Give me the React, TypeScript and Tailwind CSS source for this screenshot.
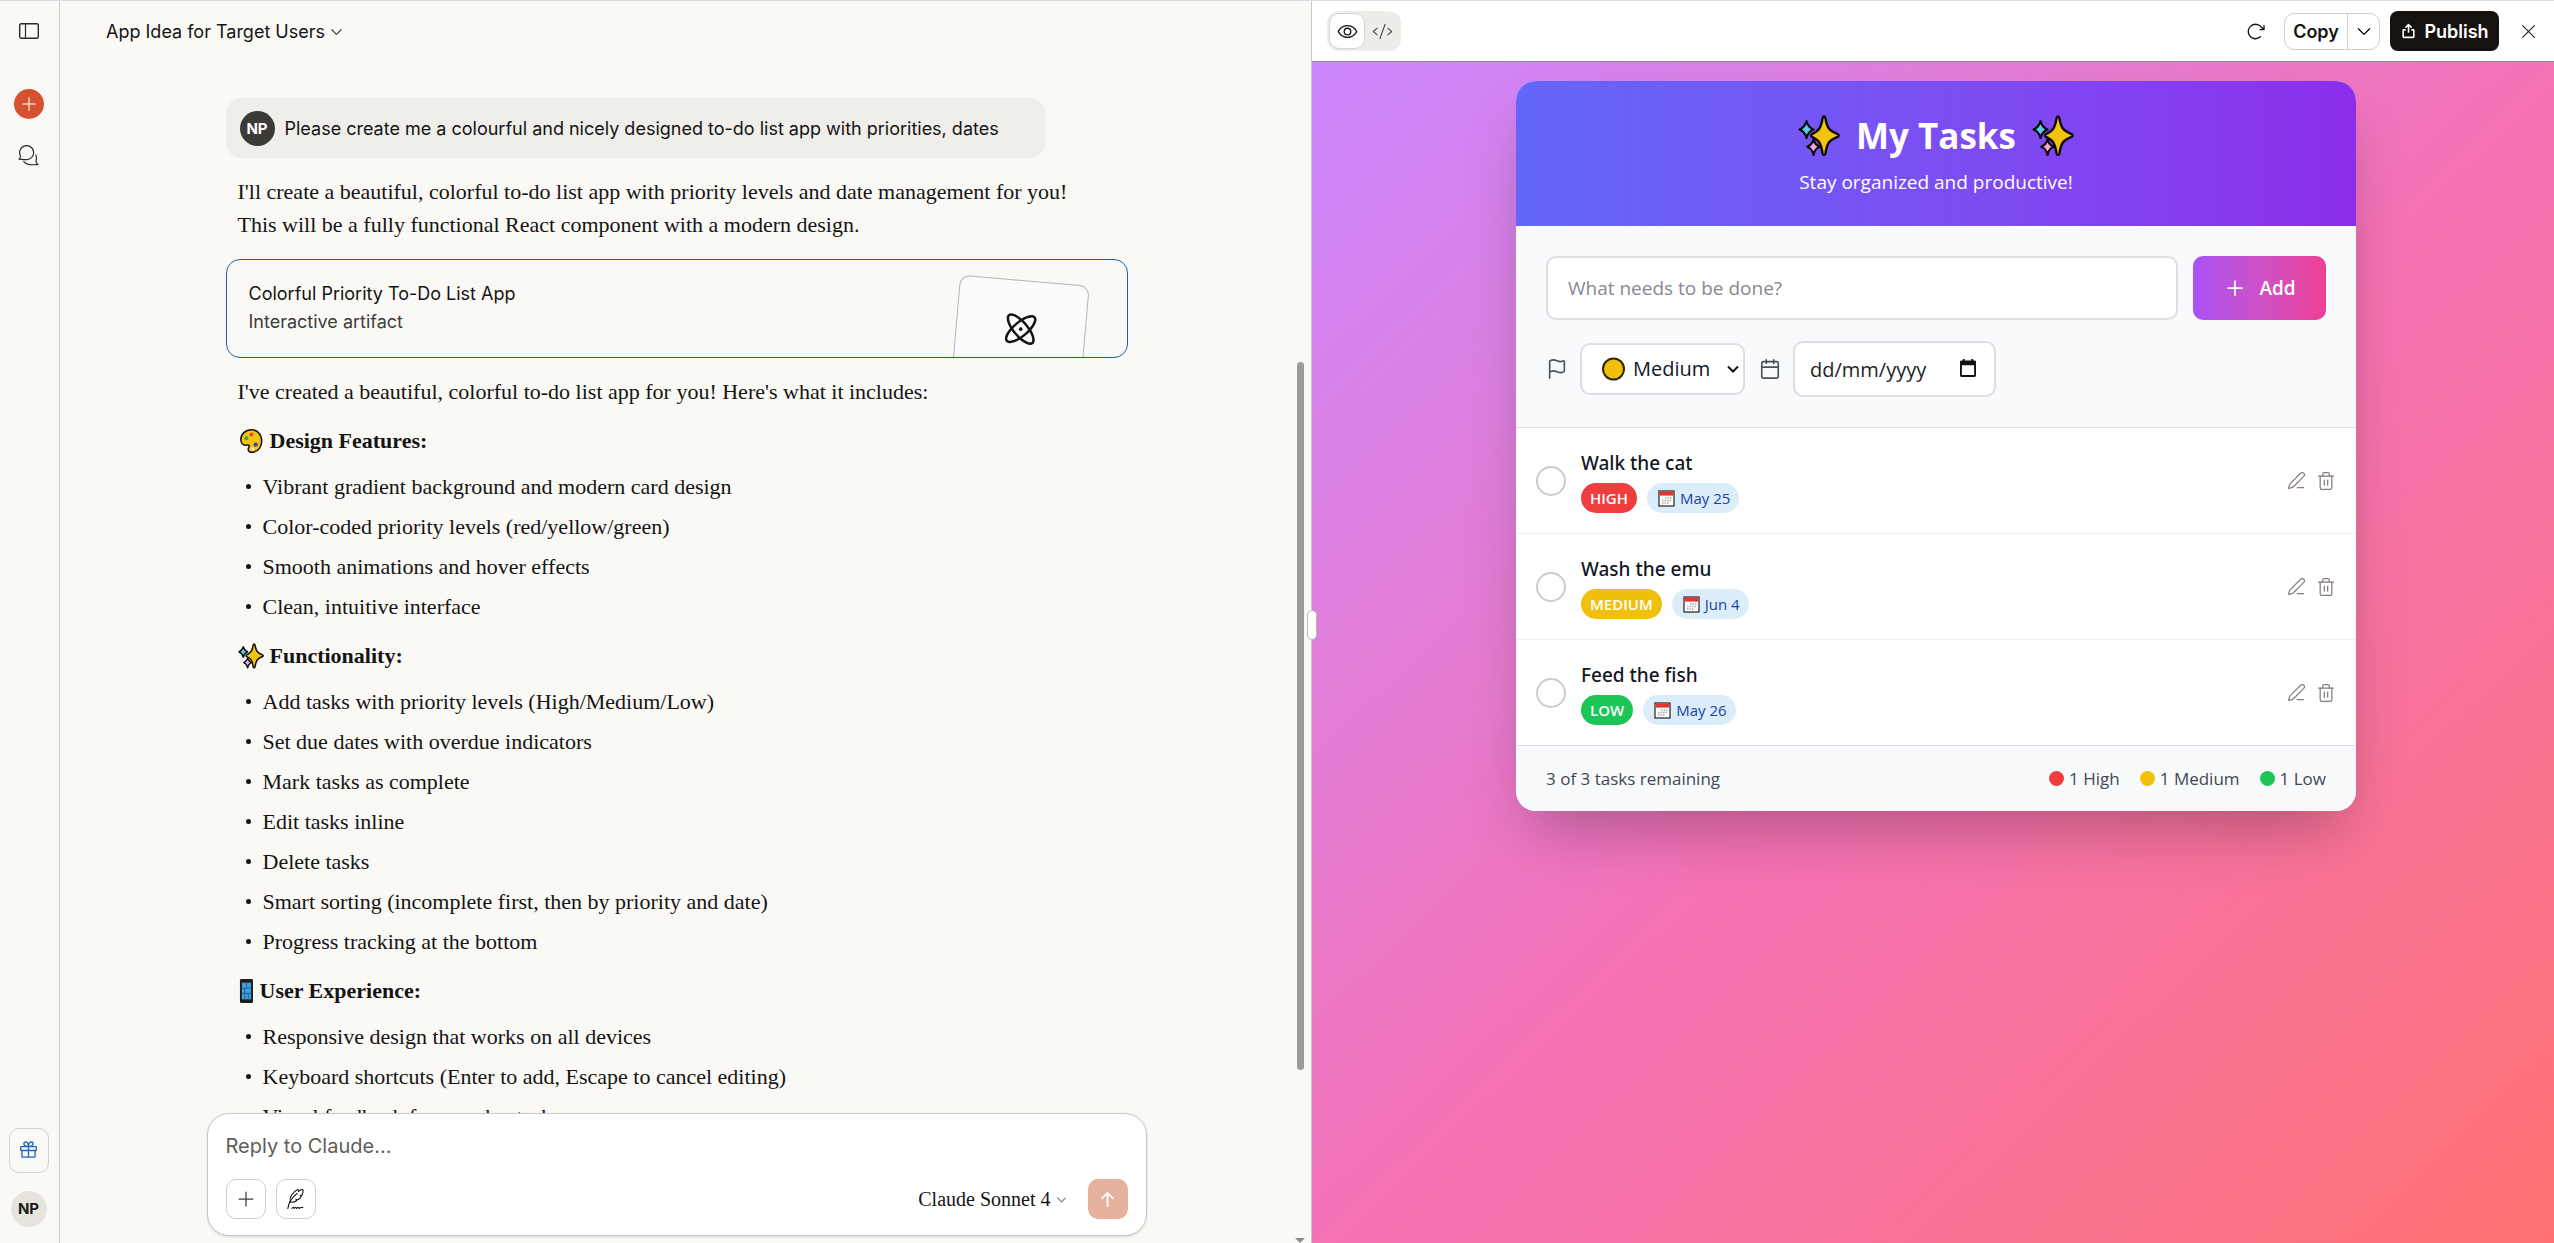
import { useState } from "react";
import {
  PiArrowClockwise,
  PiArrowUpBold,
  PiAtom,
  PiCaretDown,
  PiCodeLight,
  PiExportBold,
  PiEye,
  PiGift,
  PiPlus,
  PiXLight,
} from "react-icons/pi";
import { Calendar, Flag, PenLine, Plus, Trash2 } from "lucide-react";

type Priority = "high" | "medium" | "low";

interface Task {
  id: number;
  text: string;
  priority: Priority;
  due: string;
}

const TASKS: Task[] = [
  { id: 1, text: "Walk the cat", priority: "high", due: "May 25" },
  { id: 2, text: "Wash the emu", priority: "medium", due: "Jun 4" },
  { id: 3, text: "Feed the fish", priority: "low", due: "May 26" },
];

const PRIORITY_COLOR: Record<Priority, string> = {
  high: "bg-[#f03e3e]",
  medium: "bg-[#f0c00c]",
  low: "bg-[#1cc656]",
};

const PRIORITY_LABEL: Record<Priority, string> = {
  high: "High",
  medium: "Medium",
  low: "Low",
};

const SECTIONS = [
  {
    icon: <PaletteIcon />,
    title: "Design Features:",
    items: [
      "Vibrant gradient background and modern card design",
      "Color-coded priority levels (red/yellow/green)",
      "Smooth animations and hover effects",
      "Clean, intuitive interface",
    ],
  },
  {
    icon: <SparklesIcon className="h-[26px] w-[26px]" />,
    title: "Functionality:",
    items: [
      "Add tasks with priority levels (High/Medium/Low)",
      "Set due dates with overdue indicators",
      "Mark tasks as complete",
      "Edit tasks inline",
      "Delete tasks",
      "Smart sorting (incomplete first, then by priority and date)",
      "Progress tracking at the bottom",
    ],
  },
  {
    icon: <PhoneIcon />,
    title: "User Experience:",
    items: [
      "Responsive design that works on all devices",
      "Keyboard shortcuts (Enter to add, Escape to cancel editing)",
      "Visual feedback for overdue tasks",
    ],
  },
];

function PaletteIcon() {
  return (
    <svg viewBox="0 0 28 28" className="h-[26px] w-[26px]" aria-hidden="true">
      <path
        d="M14.500 2C8 2 3 6.500 3 12.500c0 4 2.500 6 5.200 6 2.200 0 3.600-.6 4 .8.3 1.200-1.500 2.200-1.200 4.200.4 2.200 3 3 6 2.500 5-1 8.500-6 8.500-12C25.500 7 21 2 14.500 2Z"
        fill="#f3c30e"
        stroke="#111"
        strokeWidth="1.600"
      />
      <circle cx="14.500" cy="7" r="2.200" fill="#e8453c" />
      <circle cx="9" cy="11" r="2.100" fill="#3aa655" />
      <circle cx="19" cy="18" r="2.300" fill="#3b3fa8" />
      <circle cx="16" cy="22.500" r="1.500" fill="#fff" />
    </svg>
  );
}

function SparklesIcon({ className }: { className: string }) {
  return (
    <svg viewBox="0 0 42 42" className={className} aria-hidden="true" strokeLinejoin="round">
      <path
        d="M26 1.500c.6 0 1.200.6 1.400 1.600 1.600 9.400 3.200 12.400 12.200 16 1.400.6 1.400 2.200 0 2.800-9 3.600-10.600 6.600-12.200 16.500-.4 2-2.400 2-2.800 0C23 28.500 21.400 25.500 14 21.900c-1.200-.6-1.200-2.200 0-2.800 7.400-3.600 9-6.600 10.600-16 .2-1 .8-1.600 1.400-1.600Z"
        fill="#f3c30e"
        stroke="#0b0b0b"
        strokeWidth="2.400"
      />
      <path
        d="M8.500 6c1 4.500 2.500 6.500 7 8.500-4.500 2-6 4-7 8.500-1-4.500-2.500-6.500-7-8.500 4.500-2 6-4 7-8.500Z"
        fill="#5bc8ea"
        stroke="#0b0b0b"
        strokeWidth="2.200"
      />
      <path
        d="M15.500 24.500c.9 3.800 2.200 5.500 6.200 7.200-4 1.800-5.300 3.500-6.200 8.300-.9-4.800-2.200-6.500-6.200-8.300 4-1.700 5.300-3.400 6.200-7.200Z"
        fill="#f9a8d4"
        stroke="#0b0b0b"
        strokeWidth="2.200"
      />
    </svg>
  );
}

function PhoneIcon() {
  return (
    <svg viewBox="0 0 17 28" className="h-[26px] w-4" aria-hidden="true">
      <rect x="2" y="1" width="14" height="26" rx="1.500" fill="#1b1b1b" />
      <rect x="4" y="5" width="10" height="18" fill="#3f9fe0" />
      <path d="M4 11h10M4 16.500h10M9 5v6M7 11v12M11 16v7" stroke="#1c5f9c" />
    </svg>
  );
}

function DateEmoji() {
  return (
    <svg viewBox="0 0 17 17" className="h-[17px] w-[17px]" aria-hidden="true">
      <rect x="1" y="1" width="15" height="15" fill="#fff" stroke="#222" strokeWidth="1.200" />
      <path d="M1.600 1.600h13.800v4H1.600z" fill="#e3342f" />
      <path d="M7 8h7M4 10.500h10M4 13h7" stroke="#a9a9a9" strokeWidth="1.500" strokeDasharray="1.500 1" />
    </svg>
  );
}

function ChatsIcon() {
  return (
    <svg
      viewBox="0 0 21 21"
      className="h-[21px] w-[21px]"
      fill="none"
      stroke="currentColor"
      strokeWidth="1.200"
      strokeLinejoin="round"
      strokeLinecap="round"
      aria-hidden="true"
    >
      <path d="M1 14.200c1-.9 1.500-1.800 1.600-3A7 7 0 1 1 9.200 14.600c-2.600.1-5-.2-8.200-.4Z" />
      <path d="M17.800 10c1.200 2.600 1 4.800.2 6.600.3 1.300 1 2.200 2 2.900-3.200.2-6.200.5-8.800.1-2.400-.4-4.300-1.500-5.400-3" />
    </svg>
  );
}

function QuillIcon() {
  return (
    <svg
      viewBox="0 0 22 24"
      className="h-[22px] w-5"
      fill="none"
      stroke="currentColor"
      strokeWidth="1.200"
      strokeLinecap="round"
      strokeLinejoin="round"
      aria-hidden="true"
    >
      <path d="M2 22.500c.6-4 1.800-7 3.800-10 2-2.800 4-5 6.500-6.500" />
      <path d="M4.500 15.500C3.500 10 7.500 4 13 1.500c.6.800.8 1.400.8 2.200C15 2.200 16.500 1.500 18.500 1.500c.8 2.500.3 4.500-.8 6.200l-2.200.4 1.200 1.200c-.8 1.600-2 2.800-3.600 3.600l-2.200-.2.800 1.200c-1.800 1.200-4 1.800-6.500 1.600" />
      <path d="M6.500 22.500c1-1.800 2-1.800 2.500 0 .9-1.800 2-1.800 2.600 0 1-1.800 2.100-1.800 2.700 0 1.200-1.500 2.500-1 4.200-1.200" />
    </svg>
  );
}

function Sidebar() {
  return (
    <nav className="flex flex-col items-center border-r border-[#c9cbcf] pt-[19px] pr-[2px] pb-4">
      <button aria-label="Toggle sidebar" className="flex h-[22px] items-center text-[#2b2a27]">
        <svg viewBox="0 0 20 16" className="h-4 w-5" fill="none" stroke="currentColor">
          <rect x=".7" y=".7" width="18.600" height="14.600" rx="1.500" strokeWidth="1.400" />
          <path d="M6.500 1v14" strokeWidth="1.200" />
        </svg>
      </button>
      <button
        aria-label="New chat"
        className="mt-[47px] flex h-[30px] w-[30px] items-center justify-center rounded-full bg-[#d5512f] text-white"
      >
        <PiPlus size={18} />
      </button>
      <button aria-label="Chats" className="mt-[26px] text-[#2b2a27]">
        <ChatsIcon />
      </button>
      <button
        aria-label="Gift"
        className="mt-auto flex h-[45px] w-10 items-center justify-center rounded-[10px] border border-[#cdd2d8] text-[#1f66bd]"
      >
        <PiGift size={21} />
      </button>
      <button className="mt-[18px] flex h-9 w-9 items-center justify-center rounded-full bg-[#e6e4dd] font-[Inter,sans-serif] text-[15px] font-bold text-[#1c1b19]">
        NP
      </button>
    </nav>
  );
}

function ArtifactCard() {
  return (
    <button className="relative mt-[18px] flex h-[99px] w-full flex-col justify-center overflow-hidden rounded-[14px] border border-[#1f5fa8] px-[22px] pb-[2px] text-left font-[Inter,sans-serif]">
      <span className="text-[18px] leading-7 text-[#141413]">Colorful Priority To-Do List App</span>
      <span className="text-[18px] leading-7 text-[#3d3d3a]">Interactive artifact</span>
      <span className="absolute top-5 right-11 flex h-40 w-[130px] rotate-[5deg] justify-center rounded-[10px] border border-[#b5b5b5] bg-[#fbfbfd] pt-7">
        <PiAtom size={40} className="text-[#141413]" />
      </span>
    </button>
  );
}

function Composer() {
  return (
    <form
      className="mx-auto flex w-full max-w-[940px] flex-col rounded-[22px] border border-[#c8c8cc] bg-white px-[18px] pt-4 pb-4 shadow-sm"
      onSubmit={(e) => e.preventDefault()}
    >
      <input
        aria-label="Reply to Claude"
        placeholder="Reply to Claude..."
        className="h-8 w-full font-[Inter,sans-serif] text-[20px] outline-none placeholder:text-[#5f5d59]"
      />
      <div className="mt-[17px] flex items-center gap-[10px]">
        <button
          type="button"
          aria-label="Add content"
          className="flex h-10 w-10 items-center justify-center rounded-[10px] border border-[#cfcfcf] text-[#3d3d3a]"
        >
          <PiPlus size={20} />
        </button>
        <button
          type="button"
          aria-label="Choose style"
          className="flex h-10 w-10 items-center justify-center rounded-[10px] border border-[#cfcfcf] text-[#141413]"
        >
          <QuillIcon />
        </button>
        <button
          type="button"
          className="mr-[10px] ml-auto flex items-center gap-1 font-['Liberation_Serif',serif] text-[20px] text-[#141413]"
        >
          <span>
            <span className="font-medium">Claude</span> Sonnet 4
          </span>
          <PiCaretDown size={13} className="text-[#6b6a66]" />
        </button>
        <button
          aria-label="Send"
          className="flex h-10 w-10 items-center justify-center rounded-[10px] bg-[#e5b19d] text-white"
        >
          <PiArrowUpBold size={19} />
        </button>
      </div>
    </form>
  );
}

function Chat() {
  return (
    <main className="relative flex min-h-0 flex-col pr-[18px] pb-[7px]">
      <header className="flex h-[61px] shrink-0 items-center pl-[46px]">
        <button className="flex items-center gap-1 font-[Inter,sans-serif] text-[18px] text-[#141413]">
          App Idea for Target Users
          <PiCaretDown size={15} />
        </button>
      </header>

      <div className="min-h-0 flex-1 overflow-hidden pt-9">
        <div className="mx-auto max-w-[902px] font-['Liberation_Serif',serif] text-[22px] leading-[33px] text-[#141413]">
          <div className="flex h-[60px] w-fit items-center gap-[10px] rounded-[15px] bg-[#efeeea] pr-[46px] pl-[14px] font-[Inter,sans-serif] text-[18px]">
            <span className="flex h-[35px] w-[35px] items-center justify-center rounded-full bg-[#3b3a36] text-[15px] font-bold text-white">
              NP
            </span>
            Please create me a colourful and nicely designed to-do list app with priorities, dates
          </div>

          <p className="mt-[17px] px-3">
            I'll create a beautiful, colorful to-do list app with priority levels and date management for you!
            <br />
            This will be a fully functional React component with a modern design.
          </p>

          <ArtifactCard />

          <p className="mt-[17px] px-3">
            I've created a beautiful, colorful to-do list app for you! Here's what it includes:
          </p>

          {SECTIONS.map((s) => (
            <section key={s.title} className="mt-4 px-3">
              <h2 className="flex items-center gap-[6px] font-bold">
                {s.icon}
                {s.title}
              </h2>
              <ul className="mt-[13px] ml-2 flex flex-col gap-[7px]">
                {s.items.map((item) => (
                  <li key={item} className="flex items-center gap-3">
                    <span className="h-[5px] w-[5px] rounded-full bg-[#141413]" />
                    {item}
                  </li>
                ))}
              </ul>
            </section>
          ))}
        </div>
      </div>

      <Composer />

      {/* scroll thumb */}
      <div className="absolute top-[361px] right-[7px] bottom-[173px] w-[7px] rounded-full bg-[#9b9b98]" />
      <svg viewBox="0 0 10 5" className="absolute right-[6px] bottom-0 h-[5px] w-[10px]" aria-hidden="true">
        <path d="M0 0h10L5 5Z" fill="#8b8b8b" />
      </svg>
    </main>
  );
}

function Toolbar() {
  return (
    <header className="flex h-[61px] shrink-0 items-center border-b border-[#8d8793] bg-white pr-[15px] pl-[15px] font-[Inter,sans-serif]">
      <div className="flex h-10 items-center rounded-xl bg-[#eeede9] p-[2px]">
        <button
          aria-label="Preview"
          className="flex h-9 w-9 items-center justify-center rounded-[10px] border border-[#d6d4ce] bg-white text-[#141413]"
        >
          <PiEye size={21} />
        </button>
        <button aria-label="Code" className="flex h-9 w-[34px] items-center justify-center text-[#3d3d3a]">
          <PiCodeLight size={21} />
        </button>
      </div>

      <button aria-label="Refresh" className="ml-auto text-[#141413]">
        <PiArrowClockwise size={21} />
      </button>
      <div className="ml-[18px] flex h-[37px] rounded-[10px] border border-[#cfcfcf]">
        <button className="w-[63px] border-r border-[#cfcfcf] text-[18px] font-semibold text-[#141413]">Copy</button>
        <button aria-label="More copy options" className="flex w-[31px] items-center justify-center">
          <PiCaretDown size={18} />
        </button>
      </div>
      <button className="ml-[10px] flex h-10 w-[109px] items-center justify-center gap-[7px] rounded-lg bg-[#15120f] text-[18px] font-semibold text-white">
        <PiExportBold size={17} />
        Publish
      </button>
      <button aria-label="Close" className="ml-[19px] text-[#141413]">
        <PiXLight size={21} />
      </button>
    </header>
  );
}

function TaskRow({ task }: { task: Task }) {
  return (
    <li className="flex items-center gap-[15px] border-b border-[#f0f1f3] p-5 last:border-b-0">
      <input
        type="checkbox"
        aria-label={`Mark ${task.text} complete`}
        className="h-[30px] w-[30px] shrink-0 appearance-none rounded-full border-2 border-[#cbcbcb] checked:bg-green-500"
      />
      <div className="flex-1">
        <h3 className="font-['Noto_Sans',sans-serif] text-[19px] leading-[30px] font-medium text-[#14171f]">
          {task.text}
        </h3>
        <div className="mt-[5px] flex gap-[10px] text-[15px] leading-[30px]">
          <span className={`rounded-full px-[9px] font-semibold text-white uppercase ${PRIORITY_COLOR[task.priority]}`}>
            {task.priority}
          </span>
          <span className="flex items-center gap-[5px] rounded-full bg-[#dcedfa] pr-[9px] pl-[11px] text-[#1b3fa6]">
            <DateEmoji />
            {task.due}
          </span>
        </div>
      </div>
      <div className="flex gap-[10px] text-[#857b85]">
        <button aria-label="Edit task">
          <PenLine size={19} strokeWidth={1.5} />
        </button>
        <button aria-label="Delete task">
          <Trash2 size={20} strokeWidth={1.5} />
        </button>
      </div>
    </li>
  );
}

function TodoApp() {
  const [priority, setPriority] = useState<Priority>("medium");

  return (
    <div className="mx-auto max-w-[840px] overflow-hidden rounded-[20px] bg-white font-['Open_Sans',sans-serif] shadow-[0_31px_62px_-15px_rgb(0_0_0_/_0.28)]">
      <div className="bg-linear-to-r from-[#6366fb] to-[#8b2eeb] px-[30px] pt-8 pb-[29px] text-center text-white">
        <h1 className="flex items-center justify-center gap-4 text-[35px] leading-[45px] font-bold">
          <SparklesIcon className="h-[42px] w-[42px]" />
          My Tasks
          <SparklesIcon className="h-[42px] w-[42px]" />
        </h1>
        <p className="mt-[9px] text-[19px] leading-[30px]">Stay organized and productive!</p>
      </div>

      <form className="border-b border-[#dcdee3] bg-[#f9fafb] p-[30px]" onSubmit={(e) => e.preventDefault()}>
        <div className="flex gap-[15px]">
          <input
            aria-label="New task"
            placeholder="What needs to be done?"
            className="h-16 min-w-0 flex-1 rounded-[10px] border-2 border-[#dcdee3] bg-white px-5 text-[19px] placeholder:text-[#8a8790]"
          />
          <button className="flex w-[133px] items-center justify-center gap-3 rounded-[10px] bg-linear-to-r from-[#ab52f7] to-[#ef3f97] text-[19px] font-semibold text-white">
            <Plus size={24} strokeWidth={1.75} />
            Add
          </button>
        </div>
        <div className="mt-[21px] flex items-center gap-3 text-[20px] text-[#111827]">
          <Flag size={22} strokeWidth={1.75} className="shrink-0 text-[#4b4f56]" />
          <div className="relative mr-[2px]">
            <select
              aria-label="Priority"
              value={priority}
              onChange={(e) => setPriority(e.target.value as Priority)}
              className="h-[52px] w-[165px] appearance-none rounded-[10px] border-2 border-[#dcdee3] bg-white pl-[51px]"
            >
              <option value="high">High</option>
              <option value="medium">Medium</option>
              <option value="low">Low</option>
            </select>
            <span
              className={`pointer-events-none absolute top-1/2 left-[22px] h-[23px] w-[23px] -translate-y-1/2 rounded-full border-2 border-black/80 ${PRIORITY_COLOR[priority]}`}
            />
            <svg
              viewBox="0 0 12 8"
              className="pointer-events-none absolute top-1/2 right-[6px] h-2 w-3 -translate-y-1/2"
              fill="none"
              stroke="#111"
              strokeWidth="2"
              aria-hidden="true"
            >
              <path d="M1 1.500 6 6.500l5-5" />
            </svg>
          </div>
          <Calendar size={22} strokeWidth={1.75} className="shrink-0 text-[#4b4f56]" />
          <div className="relative">
            <input
              aria-label="Due date"
              placeholder="dd/mm/yyyy"
              className="h-14 w-[203px] rounded-[10px] border-2 border-[#dcdee3] bg-white pl-[15px] placeholder:text-[#22242a]"
            />
            <svg
              viewBox="0 0 17 19"
              className="pointer-events-none absolute top-[18px] right-5 h-[18px] w-4"
              aria-hidden="true"
            >
              <path
                d="M3 0h2v1.500h7V0h2v1.500h1.500A1.500 1.500 0 0 1 17 3v14.500a1.500 1.500 0 0 1-1.500 1.500h-14A1.500 1.500 0 0 1 0 17.500V3a1.500 1.500 0 0 1 1.500-1.500H3ZM2 6.500V17h13V6.500Z"
                fill="#111"
                fillRule="evenodd"
              />
            </svg>
          </div>
        </div>
      </form>

      <ul>
        {TASKS.map((task) => (
          <TaskRow key={task.id} task={task} />
        ))}
      </ul>

      <footer className="flex items-center justify-between border-t border-[#dcdee3] bg-[#f9fafb] px-[30px] py-5 text-[17px] leading-[25px] text-[#3f4754]">
        <span>
          {TASKS.length} of {TASKS.length} tasks remaining
        </span>
        <div className="flex gap-5">
          {TASKS.map((task) => (
            <span key={task.id} className="flex items-center gap-[5px]">
              <span className={`h-[15px] w-[15px] rounded-full ${PRIORITY_COLOR[task.priority]}`} />
              1 {PRIORITY_LABEL[task.priority]}
            </span>
          ))}
        </div>
      </footer>
    </div>
  );
}

export default function App() {
  return (
    <div className="grid h-screen grid-cols-[60px_1251fr_1243fr] overflow-hidden border-t border-[#d9d9e2] bg-[#faf9f6]">
      <Sidebar />
      <Chat />
      <section className="relative flex min-h-0 flex-col border-l border-[#c9cbcf]">
        <Toolbar />
        <div className="flex-1 bg-linear-to-br from-[#cb86ff] via-[#f472b6] to-[#ff7171] py-[19px] pr-[18px] pl-6">
          <TodoApp />
        </div>
        {/* resize handle */}
        <div className="absolute top-[609px] -left-[5px] h-[30px] w-[10px] rounded-full border border-[#b9b9b9] bg-white" />
      </section>
    </div>
  );
}
